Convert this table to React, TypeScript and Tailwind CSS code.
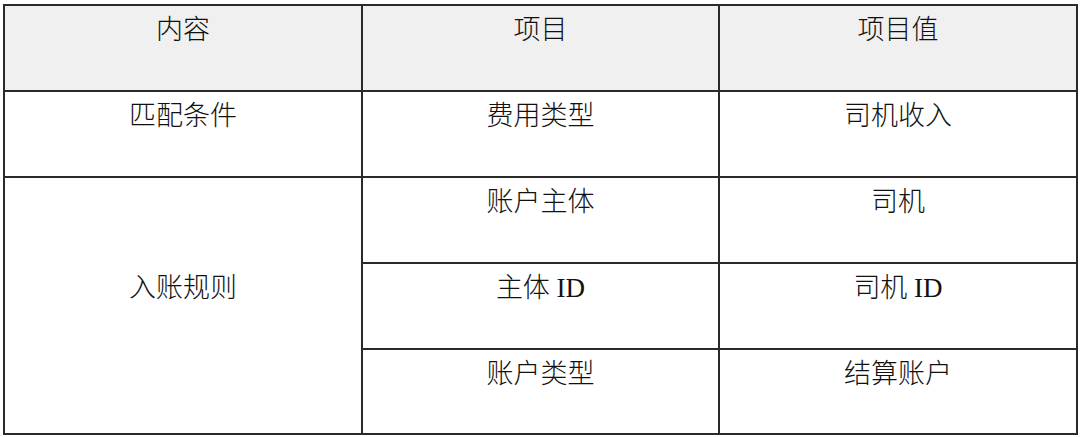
const cell =
  "border-2 border-[#2a2a2a] text-center align-middle p-0 text-[27px] leading-[36px] font-light text-[#111]";

function Cell({ children, rowSpan, className = "" }: { children: string; rowSpan?: number; className?: string }) {
  return (
    <td rowSpan={rowSpan} className={`${cell} ${className}`}>
      <div>{children}</div>
      <div>&nbsp;</div>
    </td>
  );
}

export default function App() {
  return (
    <div
      className="w-[1080px] h-[437px] bg-white pt-[4px] pl-[3px]"
      style={{ fontFamily: '"Liberation Serif", "Noto Sans CJK SC", serif' }}
    >
      <table className="w-[1075px] border-collapse table-fixed">
        <colgroup>
          <col className="w-[358px]" />
          <col className="w-[357px]" />
          <col className="w-[358px]" />
        </colgroup>
        <tbody>
          <tr className="h-[86px] bg-[#f0f0f0]">
            <Cell>内容</Cell>
            <Cell>项目</Cell>
            <Cell>项目值</Cell>
          </tr>
          <tr className="h-[86px]">
            <Cell>匹配条件</Cell>
            <Cell>费用类型</Cell>
            <Cell>司机收入</Cell>
          </tr>
          <tr className="h-[86px]">
            <Cell rowSpan={3}>入账规则</Cell>
            <Cell>账户主体</Cell>
            <Cell>司机</Cell>
          </tr>
          <tr className="h-[86px]">
            <Cell>主体 ID</Cell>
            <Cell>司机 ID</Cell>
          </tr>
          <tr className="h-[85px]">
            <Cell>账户类型</Cell>
            <Cell>结算账户</Cell>
          </tr>
        </tbody>
      </table>
    </div>
  );
}
